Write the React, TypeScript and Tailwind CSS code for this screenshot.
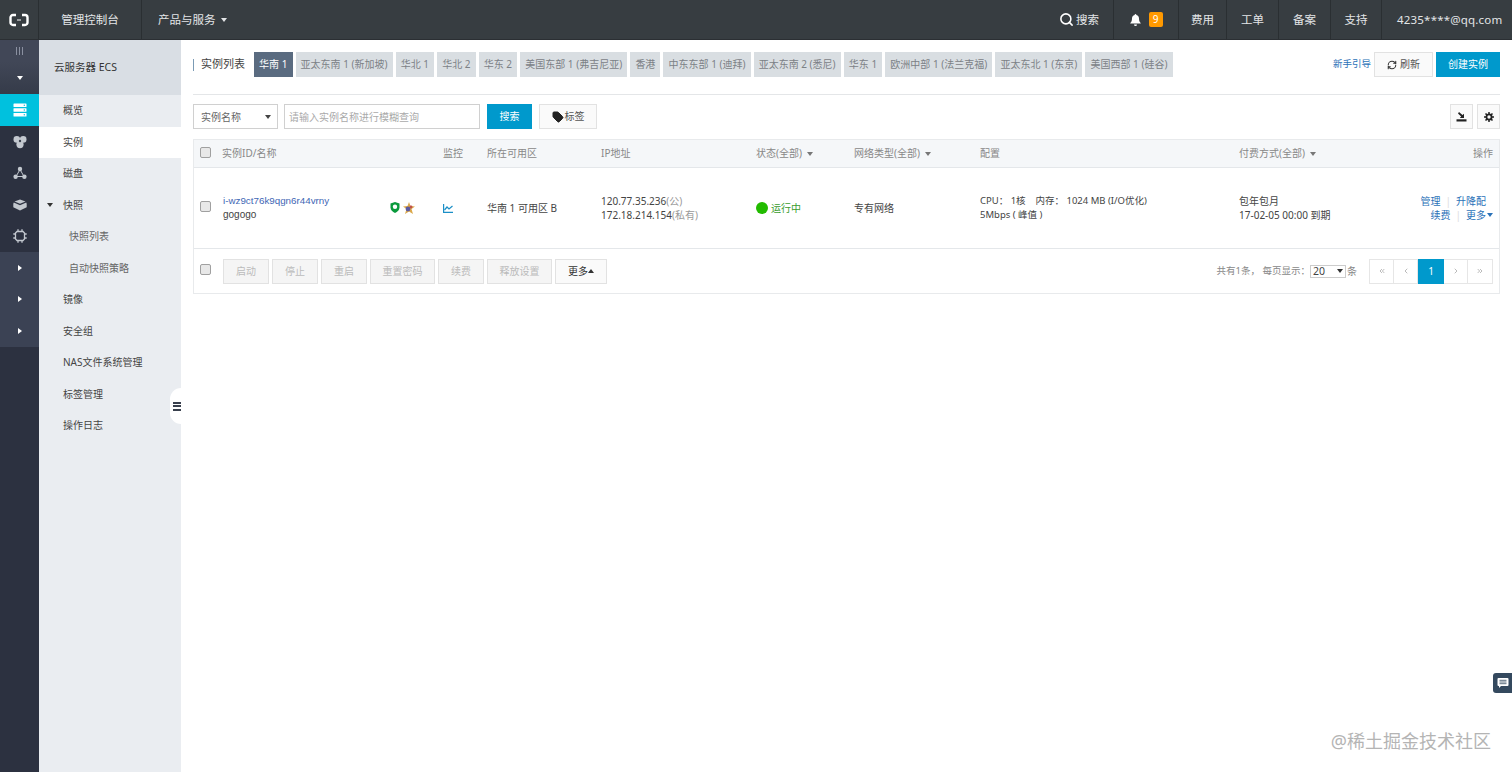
import React from 'react';
import { Search, RefreshCw, ChevronLeft, ChevronRight, ChevronsLeft, ChevronsRight, Tag } from 'lucide-react';

const REGIONS = [
  '华南 1',
  '亚太东南 1 (新加坡)',
  '华北 1',
  '华北 2',
  '华东 2',
  '美国东部 1 (弗吉尼亚)',
  '香港',
  '中东东部 1 (迪拜)',
  '亚太东南 2 (悉尼)',
  '华东 1',
  '欧洲中部 1 (法兰克福)',
  '亚太东北 1 (东京)',
  '美国西部 1 (硅谷)',
];

const MENU = [
  { label: '概览' },
  { label: '实例', active: true },
  { label: '磁盘' },
  { label: '快照', open: true },
  { label: '快照列表', sub: true },
  { label: '自动快照策略', sub: true },
  { label: '镜像' },
  { label: '安全组' },
  { label: 'NAS文件系统管理' },
  { label: '标签管理' },
  { label: '操作日志' },
];

const ACTIONS = [
  { label: '启动', w: 'w-[46px]' },
  { label: '停止', w: 'w-[46px]' },
  { label: '重启', w: 'w-[46px]' },
  { label: '重置密码', w: 'w-[65px]' },
  { label: '续费', w: 'w-[46px]' },
  { label: '释放设置', w: 'w-[65px]' },
];

const ROW_GRID = 'grid grid-cols-[28px_221px_44px_114px_155px_98px_126px_259px_1fr] items-center';

function Caret({ className }: { className: string }) {
  return <span className={`inline-block w-0 h-0 border-x-[3.5px] border-x-transparent border-t-[4px] ${className}`} />;
}

function CheckBox() {
  return <span className="block w-[11px] h-[11px] rounded-[2px] border border-[#a0a0a0] bg-[#e8e8e8]" />;
}

function RailIcon({ name }: { name: string }) {
  if (name === 'server') {
    return (
      <svg width="14" height="14" viewBox="0 0 14 14" fill="#fff">
        <rect x="0.5" y="0.5" width="13" height="3.6" rx="0.6" />
        <rect x="0.5" y="5.2" width="13" height="3.6" rx="0.6" />
        <rect x="0.5" y="9.9" width="13" height="3.6" rx="0.6" />
        <circle cx="11.3" cy="2.3" r="0.7" fill="#00c1de" />
        <circle cx="11.3" cy="7" r="0.7" fill="#00c1de" />
        <circle cx="11.3" cy="11.7" r="0.7" fill="#00c1de" />
      </svg>
    );
  }
  if (name === 'cloud') {
    return (
      <svg width="14" height="14" viewBox="0 0 14 14" fill="#c3c8cf">
        <circle cx="3.8" cy="4.4" r="3.3" />
        <circle cx="10.2" cy="4.4" r="3.3" />
        <circle cx="7" cy="9.6" r="3.6" />
        <circle cx="7" cy="6" r="1.2" fill="#39404d" />
      </svg>
    );
  }
  if (name === 'nodes') {
    return (
      <svg width="14" height="14" viewBox="0 0 14 14" fill="#c3c8cf" stroke="#c3c8cf">
        <path d="M7 3.5 3 10.5h8z" fill="none" strokeWidth="1" />
        <circle cx="7" cy="3" r="2.2" stroke="none" />
        <circle cx="2.6" cy="10.8" r="2.2" stroke="none" />
        <circle cx="11.4" cy="10.8" r="2.2" stroke="none" />
      </svg>
    );
  }
  if (name === 'disk') {
    return (
      <svg width="14" height="12" viewBox="0 0 14 12" fill="#c3c8cf">
        <path d="M7 .5l5.500 2L7 4.800 1.500 2.500z" />
        <path d="M.8 3.600 7 6.200l6.200-2.600 .5 1.200v3.400L7 11.500.3 8.200V4.800z" />
      </svg>
    );
  }
  return (
    <svg width="14" height="14" viewBox="0 0 14 14" fill="none" stroke="#c3c8cf" strokeWidth="1.3">
      <path d="M4 2.500h6L11.500 4v6L10 11.500H4L2.500 10V4z" />
      <path d="M5 .3v2M9 .3v2M5 11.700v2M9 11.700v2M.3 5h2M.3 9h2M11.700 5h2M11.700 9h2" />
    </svg>
  );
}

function LeftRail() {
  return (
    <div className="w-[39px] shrink-0 flex flex-col bg-[#2c3140]">
      <div className="h-[22px] flex items-center justify-center gap-[1.5px] bg-[#414757]">
        <span className="w-[1.5px] h-[8px] bg-[#8a90a0]" />
        <span className="w-[1.5px] h-[8px] bg-[#8a90a0]" />
        <span className="w-[1.5px] h-[8px] bg-[#8a90a0]" />
      </div>
      <div className="h-[32px] flex items-center justify-center bg-gradient-to-b from-[#414757] to-[#353b49]">
        <Caret className="border-t-white" />
      </div>
      <div className="h-[32px] flex items-center justify-center bg-[#00c1de]">
        <RailIcon name="server" />
      </div>
      {['cloud', 'nodes', 'disk', 'chip'].map((n) => (
        <div key={n} className="h-[31.5px] flex items-center justify-center bg-[#2c3140]">
          <RailIcon name={n} />
        </div>
      ))}
      {[0, 1, 2].map((i) => (
        <div key={i} className="h-[31.5px] flex items-center justify-center bg-[#3b4254]">
          <span className="w-0 h-0 border-y-[3.5px] border-y-transparent border-l-[4px] border-l-white" />
        </div>
      ))}
    </div>
  );
}

function SideMenu() {
  return (
    <div className="relative w-[142px] shrink-0 bg-[#eaedf1]">
      <div className="h-[55px] flex items-center pl-[15px] bg-[#d9dee4] text-[10.5px] text-[#333]">云服务器 ECS</div>
      {MENU.map((item) => (
        <div
          key={item.label}
          className={`relative h-[31.5px] flex items-center text-[10px] ${item.sub ? 'pl-[30px] text-[#666]' : 'pl-[24px] text-[#444]'} ${item.active ? 'bg-white' : ''}`}
        >
          {item.open && <Caret className="absolute left-[8px] top-[13px] border-t-[#333]" />}
          {item.label}
        </div>
      ))}
      <div className="absolute right-0 top-[348px] w-[11px] h-[36px] rounded-l-full bg-white flex flex-col items-end justify-center gap-[1.5px]">
        <span className="w-[8px] h-[2px] bg-[#39404d]" />
        <span className="w-[8px] h-[2px] bg-[#39404d]" />
        <span className="w-[8px] h-[2px] bg-[#39404d]" />
      </div>
    </div>
  );
}

export default function App() {
  return (
    <div className="relative h-[772px] overflow-hidden flex flex-col bg-white text-[#333] font-['Noto_Sans','Noto_Sans_CJK_SC',sans-serif]">
      {/* top bar */}
      <header className="h-[40px] shrink-0 flex items-center bg-[#373d41] text-[#e3e5e7] text-[11.5px] border-b border-[#2b2f33]">
        <div className="w-[39px] h-full flex items-center justify-center border-r border-[#2a2f32]">
          <svg width="20" height="14" viewBox="0 0 20 14" fill="none" stroke="#fff" strokeWidth="2.400">
            <path d="M7 2H4a2.500 2.500 0 0 0-2.500 2.500v5A2.500 2.500 0 0 0 4 12h3M13 2h3a2.500 2.500 0 0 1 2.500 2.500v5A2.500 2.500 0 0 1 16 12h-3" />
            <path d="M8 7h4" strokeWidth="1" />
          </svg>
        </div>
        <div className="w-[103px] h-full flex items-center justify-center border-r border-[#2a2f32]">管理控制台</div>
        <div className="pl-[16px] flex items-center gap-[5px]">
          产品与服务
          <Caret className="border-t-[#e3e5e7]" />
        </div>
        <div className="ml-auto h-full flex items-center gap-[2px] pr-[14px] border-r border-[#2a2f32]">
          <Search size={15} strokeWidth={2.500} color="#fff" />
          搜索
        </div>
        <div className="w-[65px] h-full flex items-center justify-center gap-[8px] border-r border-[#2a2f32]">
          <svg width="11" height="12" viewBox="0 0 11 12" fill="#fff">
            <path d="M5.500 0c.5 0 .9.4.9.9 1.700.4 2.600 1.800 2.600 3.600 0 2.300.6 3.400 1.700 4.500v.6H.3V9c1.100-1.100 1.700-2.200 1.700-4.500 0-1.800.9-3.200 2.600-3.600 0-.5.4-.9.9-.9zM4 10.400h3a1.500 1.500 0 0 1-3 0z" />
          </svg>
          <span className="w-[14px] h-[15px] rounded-[2px] bg-[#f90] text-white text-[10px] flex items-center justify-center">9</span>
        </div>
        <div className="w-[48px] h-full flex items-center justify-center border-r border-[#2a2f32]">费用</div>
        <div className="w-[52px] h-full flex items-center justify-center border-r border-[#2a2f32]">工单</div>
        <div className="w-[52px] h-full flex items-center justify-center border-r border-[#2a2f32]">备案</div>
        <div className="w-[51px] h-full flex items-center justify-center border-r border-[#2a2f32]">支持</div>
        <div className="w-[130px] h-full flex items-center pl-[15px] tracking-[0.2px]">4235****@qq.com</div>
      </header>

      <div className="flex-1 flex min-h-0">
        <LeftRail />
        <SideMenu />

        <main className="flex-1 pl-[12px] pr-[12px] pt-[12px] min-w-0">
          {/* title + region tabs */}
          <div className="h-[43px] flex items-start border-b border-[#e4e6e8]">
            <div className="h-[25px] flex items-center">
              <span className="w-px h-[12px] bg-[#7b9bb5] mr-[7px]" />
              <span className="text-[11px] text-[#444] whitespace-nowrap">实例列表</span>
            </div>
            <div className="ml-[9px] flex gap-[3px]">
              {REGIONS.map((r, i) => (
                <span
                  key={r}
                  className={`h-[25px] px-[5.1px] flex items-center whitespace-nowrap text-[10px] ${i === 0 ? 'bg-[#5a6b80] text-white' : 'bg-[#d9dee2] text-[#7c8186]'}`}
                >
                  {r}
                </span>
              ))}
            </div>
            <div className="ml-auto flex items-center">
              <span className="text-[9.500px] text-[#2b72b8] mr-[3px] -mt-[1px] whitespace-nowrap">新手引导</span>
              <span className="w-[59px] h-[25px] flex items-center justify-center gap-[3px] bg-[#fafafa] border border-[#e2e2e2] text-[10px] text-[#555]">
                <RefreshCw size={10} strokeWidth={2.500} color="#333" />
                刷新
              </span>
              <span className="ml-[3px] w-[64px] h-[25px] flex items-center justify-center bg-[#0099cc] text-white text-[10px]">创建实例</span>
            </div>
          </div>

          {/* search row */}
          <div className="mt-[9px] h-[25px] flex items-center">
            <div className="w-[85px] h-full flex items-center justify-between pl-[7px] pr-[6px] pt-px border border-[#d0d0d0] text-[10px] text-[#666]">
              实例名称
              <Caret className="border-t-[#444]" />
            </div>
            <div className="ml-[6px] w-[196px] h-full flex items-center pl-[4px] pt-px border border-[#d0d0d0] text-[10px] text-[#aaa]">请输入实例名称进行模糊查询</div>
            <div className="ml-[7px] w-[45px] h-full flex items-center justify-center bg-[#0099cc] text-white text-[10px]">搜索</div>
            <div className="ml-[7px] w-[58px] h-full flex items-center justify-center gap-[1px] bg-[#fafafa] border border-[#e2e2e2] text-[10px] text-[#555]">
              <Tag size={12} fill="#222" color="#222" />
              标签
            </div>
            <div className="ml-auto w-[23px] h-full flex items-center justify-center bg-[#fafafa] border border-[#e2e2e2]">
              <svg width="11" height="11" viewBox="0 0 11 11" fill="#222">
                <path d="M3 1l3.500 3L8 2.700V7H3.800l1.300-1.400L2 2.500z" />
                <rect x="0.500" y="8.300" width="10" height="2.200" />
              </svg>
            </div>
            <div className="ml-[4px] w-[23px] h-full flex items-center justify-center bg-[#fafafa] border border-[#e2e2e2]">
              <svg width="10" height="10" viewBox="0 0 10 10" fill="none" stroke="#222">
                <circle cx="5" cy="5" r="2.600" strokeWidth="1.800" />
                <path d="M5 0v2M5 8v2M0 5h2M8 5h2M1.500 1.500l1.400 1.400M7.100 7.100l1.400 1.400M8.500 1.500 7.100 2.900M2.900 7.100 1.500 8.500" strokeWidth="1.500" />
              </svg>
            </div>
          </div>

          {/* instance table */}
          <div className="mt-[10px] border border-[#e8eaec]">
            <div className={`${ROW_GRID} h-[28px] bg-[#f5f7f9] border-b border-[#e4e7ea] text-[10px] text-[#888]`}>
              <div className="pl-[6px] mb-[2px]"><CheckBox /></div>
              <div>实例ID/名称</div>
              <div>监控</div>
              <div>所在可用区</div>
              <div>IP地址</div>
              <div className="flex items-center gap-[5px]">状态(全部)<Caret className="border-t-[#777]" /></div>
              <div className="flex items-center gap-[5px]">网络类型(全部)<Caret className="border-t-[#777]" /></div>
              <div>配置</div>
              <div className="flex items-center justify-between pr-[6px]">
                <span className="flex items-center gap-[5px]">付费方式(全部)<Caret className="border-t-[#777]" /></span>
                <span>操作</span>
              </div>
            </div>

            <div className={`${ROW_GRID} h-[81px] border-b border-[#e4e7ea] text-[10px] leading-[14px] text-[#444]`}>
              <div className="pl-[6px] mb-[4px]"><CheckBox /></div>
              <div className="flex items-center">
                <div className="w-[168px] pl-px font-['Liberation_Sans','Noto_Sans_CJK_SC',sans-serif]">
                  <div className="text-[#3f67b5] text-[9.800px]">i-wz9ct76k9qgn6r44vrny</div>
                  <div>gogogo</div>
                </div>
                <svg width="10" height="11" viewBox="0 0 10 11" className="-mt-[1px]">
                  <path d="M5 0l4.500 1.500v4C9.500 8 7.500 10 5 11 2.500 10 .5 8 .5 5.500v-4z" fill="#0a9a3c" />
                  <circle cx="5" cy="4.800" r="2.200" fill="#fff" />
                </svg>
                <svg width="12" height="12" viewBox="0 0 12 12" className="ml-[3px]">
                  <path d="M6 0l1.500 4L12 4.500 8.500 7 10 12 6 9.500 2 12l1.500-5L0 4.500 4.500 4z" fill="#dba84a" />
                  <circle cx="5" cy="7" r="2.400" fill="#5b5aa0" />
                  <circle cx="8" cy="5" r="1.400" fill="#c0534a" />
                </svg>
              </div>
              <div>
                <svg width="10" height="9" viewBox="0 0 10 9" fill="none" stroke="#1b8fc7" strokeWidth="1.200">
                  <path d="M.6 0v8.300H10" />
                  <path d="M1.500 6l2.500-3 2 2L9.500 2" />
                </svg>
              </div>
              <div>华南 1 可用区 B</div>
              <div>
                <div>120.77.35.236<span className="text-[#999]">(公)</span></div>
                <div>172.18.214.154<span className="text-[#999]">(私有)</span></div>
              </div>
              <div className="flex items-center gap-[3px] text-[#3a9c2e]">
                <span className="w-[12px] h-[12px] rounded-full bg-[#22bb00]" />
                运行中
              </div>
              <div>专有网络</div>
              <div className="whitespace-nowrap text-[9.500px]">
                <div>CPU： 1核 &nbsp;&nbsp; 内存： 1024 MB (I/O优化)</div>
                <div>5Mbps ( 峰值 )</div>
              </div>
              <div className="flex items-center justify-between pr-[6px]">
                <div>
                  <div>包年包月</div>
                  <div>17-02-05 00:00 到期</div>
                </div>
                <div className="text-right text-[#2b72b8]">
                  <div>管理<span className="mx-[5px] text-[#ddd]">|</span>升降配<span className="inline-block w-[7px]" /></div>
                  <div className="flex items-center justify-end">
                    续费<span className="mx-[5px] text-[#ddd]">|</span>更多
                    <Caret className="ml-[1px] border-t-[#2b72b8]" />
                  </div>
                </div>
              </div>
            </div>

            <div className="h-[44px] flex items-center text-[10px]">
              <div className="pl-[6px] w-[29px] mb-[4px]"><CheckBox /></div>
              <div className="flex gap-[3px]">
                {ACTIONS.map((a) => (
                  <span key={a.label} className={`${a.w} h-[25px] flex items-center justify-center bg-[#f5f5f5] border border-[#e2e2e2] text-[#bbb]`}>
                    {a.label}
                  </span>
                ))}
                <span className="w-[52px] h-[25px] flex items-center justify-center bg-[#fafafa] border border-[#e2e2e2] text-[#333]">
                  更多
                  <span className="w-0 h-0 border-x-[3px] border-x-transparent border-b-[4px] border-b-[#333]" />
                </span>
              </div>
              <div className="ml-auto flex items-center pr-[6px] text-[#888]">
                <span className="text-[9.500px]">共有1条， 每页显示：</span>
                <span className="w-[36px] h-[13px] flex items-center justify-between px-[2px] border border-[#ccc] text-[#444] text-[10.500px] leading-none">
                  20
                  <Caret className="border-t-[#333]" />
                </span>
                <span className="ml-[1px] mr-[12px]">条</span>
                <div className="flex items-center">
                  <span className="w-[25px] h-[25px] flex items-center justify-center border border-[#e6e6e6]"><ChevronsLeft size={8} color="#999" /></span>
                  <span className="w-[24px] h-[25px] flex items-center justify-center border border-l-0 border-[#e6e6e6]"><ChevronLeft size={8} color="#999" /></span>
                  <span className="w-[26px] h-[25px] flex items-center justify-center bg-[#0099cc] text-white">1</span>
                  <span className="w-[24px] h-[25px] flex items-center justify-center border border-l-0 border-[#e6e6e6]"><ChevronRight size={8} color="#999" /></span>
                  <span className="w-[25px] h-[25px] flex items-center justify-center border border-l-0 border-[#e6e6e6]"><ChevronsRight size={8} color="#999" /></span>
                </div>
              </div>
            </div>
          </div>
        </main>
      </div>

      {/* feedback button */}
      <div className="absolute right-0 top-[673px] w-[19px] h-[20px] rounded-l-[3px] bg-[#34495e] flex items-center justify-center">
        <svg width="12" height="12" viewBox="0 0 12 12">
          <path d="M1.500 1h9a1 1 0 0 1 1 1v6a1 1 0 0 1-1 1H4l-2 2V9h-.5a1 1 0 0 1-1-1V2a1 1 0 0 1 1-1z" fill="#fff" />
          <path d="M2.500 3.300h7M2.500 5h7M2.500 6.700h7" stroke="#34495e" strokeWidth="0.800" />
        </svg>
      </div>

      {/* watermark */}
      <div className="absolute right-[21px] top-[729px] text-[18px] leading-[24px] text-[#b4b4b4] whitespace-nowrap">@稀土掘金技术社区</div>
    </div>
  );
}
